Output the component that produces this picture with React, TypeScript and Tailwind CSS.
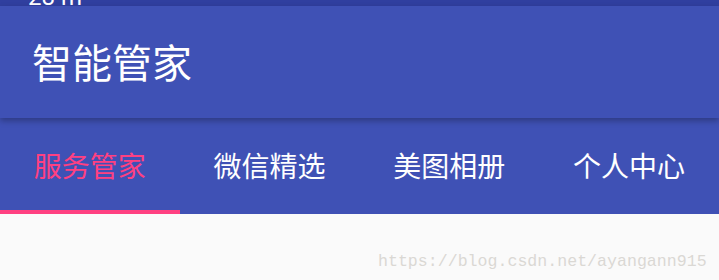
import { useState } from 'react';

const tabs = ['服务管家', '微信精选', '美图相册', '个人中心'];

const cjk = { fontFamily: '"Noto Sans CJK SC", "Noto Sans", sans-serif' };

export default function App() {
  const [active, setActive] = useState(0);

  return (
    <div className="relative flex h-[280px] w-full flex-col overflow-hidden bg-[#fafafa]">
      {/* Status bar (clipped) */}
      <div className="flex h-[6px] items-end overflow-hidden bg-[#303f9f] pl-[28px]">
        <span
          className="mb-[-3px] text-[24px] leading-[24px] text-white"
          style={{ fontFamily: 'Roboto, sans-serif' }}
        >
          28 m
        </span>
      </div>

      {/* Toolbar */}
      <div className="relative z-10 flex h-[112px] items-center bg-[#3f51b5] px-[32px] pb-[3px] shadow-[0_3px_6px_rgba(0,0,0,0.28)]">
        <h1 className="text-[40px] leading-none text-white" style={cjk}>
          智能管家
        </h1>
      </div>

      {/* Tabs */}
      <div className="grid h-[96px] grid-cols-4 bg-[#3f51b5]">
        {tabs.map((tab, idx) => (
          <button
            key={tab}
            onClick={() => setActive(idx)}
            className={`flex items-center justify-center border-b-4 pt-[2px] text-[28px] leading-none ${
              active === idx
                ? 'border-[#ff4081] text-[#ff4081]'
                : 'border-transparent text-white'
            }`}
            style={cjk}
          >
            {tab}
          </button>
        ))}
      </div>

      {/* Content */}
      <div className="flex-1 bg-[#fafafa]" />

      {/* Watermark */}
      <span
        className="absolute left-[378px] top-[252px] text-[16.6px] leading-[20px] text-[#dad8d4]"
        style={{ fontFamily: '"Liberation Mono", monospace' }}
      >
        https://blog.csdn.net/ayangann915
      </span>
    </div>
  );
}
